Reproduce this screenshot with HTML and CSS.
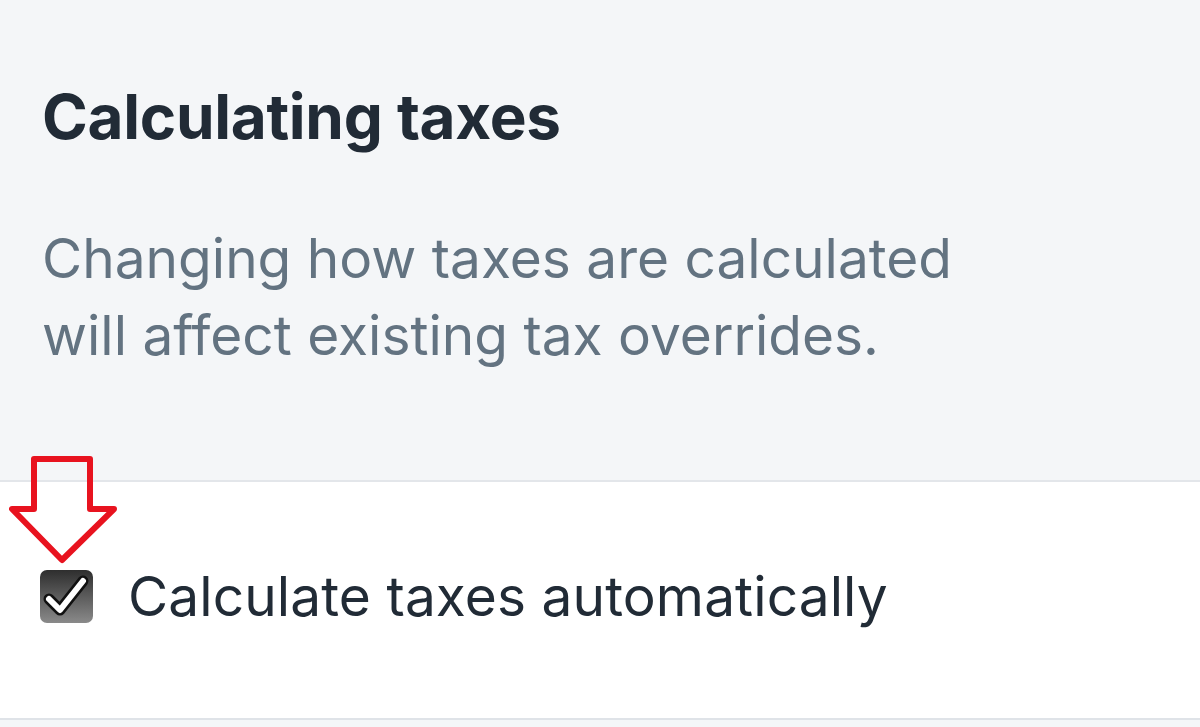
FILE: index.html
```html
<!DOCTYPE html>
<html lang="en">
<head>
    <meta charset="UTF-8">
    <title>Calculating taxes</title>
    <link rel="stylesheet" href="styles.css">
</head>
<body>
    <!-- Section header -->
    <div class="section-header">
        <h2 class="section-title">Calculating taxes</h2>
        <p class="section-text">Changing how taxes are calculated will affect existing tax overrides.</p>
    </div>

    <!-- Settings card -->
    <div class="card">
        <svg class="arrow" width="112" height="112" viewBox="0 0 112 112">
            <polygon points="25,4 81,4 81,54 105,54 53,105 3,54 25,54" fill="none" stroke="#e8131f" stroke-width="6" stroke-linejoin="round"/>
        </svg>
        <label class="check-row">
            <span class="checkbox">
                <svg width="53" height="53" viewBox="0 0 53 53">
                    <path d="M9 29 L20 40 L43 11" fill="none" stroke="#111" stroke-width="11" stroke-linecap="round" stroke-linejoin="round"/>
                    <path d="M9 29 L20 40 L43 11" fill="none" stroke="#fff" stroke-width="6" stroke-linecap="round" stroke-linejoin="round"/>
                </svg>
            </span>
            <span class="check-label">Calculate taxes automatically</span>
        </label>
    </div>
    <div class="footer-space"></div>
</body>
</html>
```

FILE: styles.css
```css
/* Reset */
* {
    margin: 0;
    padding: 0;
    box-sizing: border-box;
}

body {
    font-family: Inter, "Noto Sans", sans-serif;
    background-color: #f4f6f8;
    height: 727px;
    overflow: hidden;
}

/* Header area */
.section-header {
    height: 480px;
    padding: 80px 42px 0;
}

.section-title {
    font-size: 62px;
    font-weight: 700;
    color: #212b36;
    line-height: 74px;
    letter-spacing: -0.3px;
}

.section-text {
    margin-top: 66px;
    width: 960px;
    font-size: 55px;
    line-height: 77px;
    color: #637381;
}

/* Card */
.card {
    position: relative;
    background: #fff;
    border-top: 2px solid #e3e6ea;
    border-bottom: 2px solid #dfe3e8;
    height: 240px;
    padding: 81px 40px 0;
}

.arrow {
    position: absolute;
    left: 9px;
    top: -27px;
}

.check-row {
    display: flex;
    align-items: center;
    gap: 35px;
}

.checkbox {
    width: 53px;
    height: 53px;
    border-radius: 7px;
    background: linear-gradient(180deg, #2e2e2e, #8a8a8a);
    display: flex;
    align-items: center;
    justify-content: center;
}

.check-label {
    font-size: 55px;
    color: #212b36;
    letter-spacing: 0.1px;
}
```
